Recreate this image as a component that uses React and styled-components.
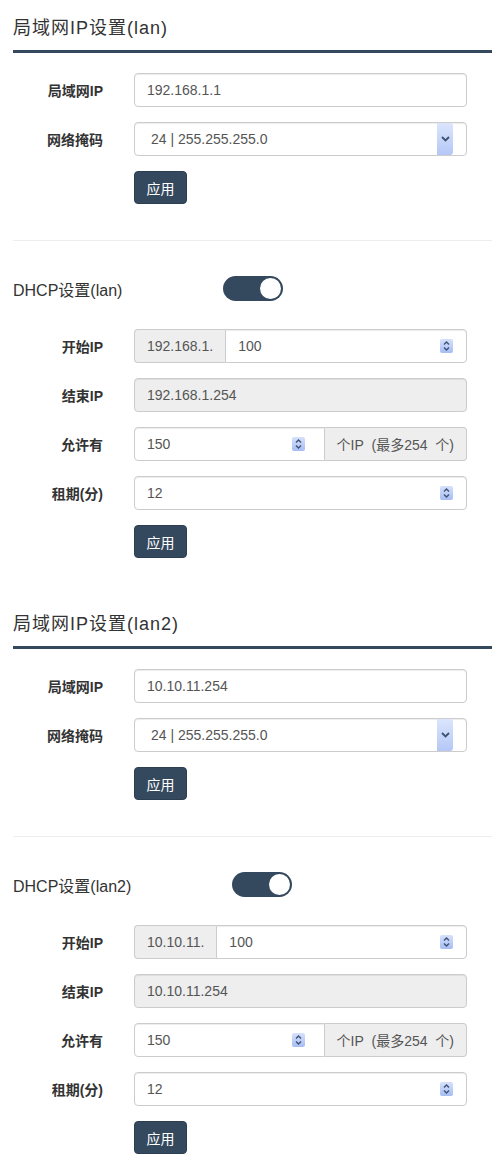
import React from "react";
import styled, { createGlobalStyle, css } from "styled-components";

const GlobalStyle = createGlobalStyle`
  body {
    margin: 0;
    background: #fff;
    color: #333;
    font-family: "Liberation Sans", Arial, "Noto Sans CJK SC", sans-serif;
    font-size: 14px;
  }
`;

const Page = styled.div`
  padding-left: 13px;
`;

const Section = styled.section`
  padding-bottom: 38px;
`;

const Title = styled.h3`
  margin: 0;
  padding: 16px 0 10px;
  font-size: 18px;
  line-height: 24px;
  letter-spacing: 1px;
  font-weight: normal;
  color: #333;
  border-bottom: 3px solid #34495e;
`;

const Form = styled.div`
  display: flex;
  flex-direction: column;
  gap: 15px;
  padding-right: 25px;
  margin-top: ${(p) => p.$top}px;
`;

const Row = styled.div`
  display: grid;
  grid-template-columns: 90px minmax(0, 1fr);
  column-gap: 31px;
  align-items: center;
`;

const Label = styled.label`
  text-align: right;
  font-weight: bold;
  font-size: 14px;
  color: #333;
`;

const Divider = styled.hr`
  margin: 36px 0 0;
  border: 0;
  border-top: 1px solid #eee;
`;

const DhcpHead = styled.div`
  display: flex;
  align-items: center;
  padding-top: 35px;
  font-size: 16px;
  color: #333;
`;

const Toggle = styled.div`
  margin-left: 101px;
  width: 60px;
  height: 25px;
  border-radius: 13px;
  background: #34495e;
  display: flex;
  align-items: center;
  justify-content: flex-end;
  padding: 0 2px;
  box-sizing: border-box;
  &::after {
    content: "";
    width: 21px;
    height: 21px;
    border-radius: 50%;
    background: #fff;
  }
`;

const Group = styled.div`
  display: flex;
  min-width: 0;
  height: 34px;
`;

const Addon = styled.span`
  display: flex;
  align-items: center;
  box-sizing: border-box;
  padding: 0 12px;
  background: #eee;
  border: 1px solid #ccc;
  color: #555;
  font-size: 14px;
  white-space: nowrap;
  ${(p) =>
    p.$side === "left"
      ? css`
          border-radius: 4px 0 0 4px;
          border-right: 0;
        `
      : css`
          border-radius: 0 4px 4px 0;
          border-left: 0;
        `}
`;

const Field = styled.div`
  flex: 1;
  min-width: 0;
  box-sizing: border-box;
  height: 34px;
  display: flex;
  align-items: center;
  padding: 0 ${(p) => p.$padRight || 13}px 0 ${(p) => p.$pad || 12}px;
  border: 1px solid #ccc;
  border-radius: ${(p) =>
    p.$join === "left" ? "0 4px 4px 0" : p.$join === "right" ? "4px 0 0 4px" : "4px"};
  background: ${(p) => (p.$readonly ? "#eee" : "#fff")};
  box-shadow: inset 0 1px 1px rgba(0, 0, 0, 0.075);
`;

const Input = styled.input`
  flex: 1;
  width: 0;
  min-width: 0;
  border: 0;
  outline: 0;
  padding: 0;
  background: transparent;
  font: inherit;
  font-size: 14px;
  color: #555;
`;

const SelectArrow = styled.span`
  align-self: stretch;
  width: 16px;
  margin-left: auto;
  border-radius: 0 3px 3px 0;
  background: linear-gradient(to bottom, #dbe5fc, #b4c7f6);
  display: flex;
  align-items: center;
  justify-content: center;
`;

const Button = styled.button`
  justify-self: start;
  height: 33px;
  width: 53px;
  padding: 0;
  border: 1px solid #2c3e50;
  border-radius: 4px;
  background: #34495e;
  color: #fff;
  font: inherit;
  font-size: 14px;
  cursor: pointer;
`;

function Spinner() {
  return (
    <svg width="13" height="14" viewBox="0 0 13 14">
      <defs>
        <linearGradient id="spg" x1="0" y1="0" x2="0" y2="1">
          <stop offset="0" stopColor="#d6e1fc" />
          <stop offset="1" stopColor="#a6bdf3" />
        </linearGradient>
      </defs>
      <rect x="0" y="0" width="13" height="14" rx="2" fill="url(#spg)" />
      <path d="M4 5.5 L6.5 3 L9 5.5" fill="none" stroke="#3f5271" strokeWidth="1.4" />
      <path d="M4 8.5 L6.5 11 L9 8.5" fill="none" stroke="#3f5271" strokeWidth="1.4" />
    </svg>
  );
}

function Chevron() {
  return (
    <svg width="9" height="6" viewBox="0 0 9 6">
      <path d="M1 1 L4.5 4.5 L8 1" fill="none" stroke="#3f5271" strokeWidth="1.8" />
    </svg>
  );
}

function LanSection({ name, ip, prefix, start, end }) {
  return (
    <Section>
      <Title>局域网IP设置({name})</Title>
      <Form $top={20}>
        <Row>
          <Label>局域网IP</Label>
          <Field>
            <Input defaultValue={ip} />
          </Field>
        </Row>
        <Row>
          <Label>网络掩码</Label>
          <Field $pad={16} $padRight={0}>
            <Input defaultValue="24 | 255.255.255.0" readOnly />
            <SelectArrow>
              <Chevron />
            </SelectArrow>
          </Field>
        </Row>
        <Row>
          <span />
          <Button>应用</Button>
        </Row>
      </Form>
      <Divider />
      <DhcpHead>
        DHCP设置({name})
        <Toggle />
      </DhcpHead>
      <Form $top={28}>
        <Row>
          <Label>开始IP</Label>
          <Group>
            <Addon $side="left">{prefix}</Addon>
            <Field $join="left">
              <Input defaultValue={start} />
              <Spinner />
            </Field>
          </Group>
        </Row>
        <Row>
          <Label>结束IP</Label>
          <Field $readonly>
            <Input defaultValue={end} readOnly />
          </Field>
        </Row>
        <Row>
          <Label>允许有</Label>
          <Group>
            <Field $join="right" $padRight={19}>
              <Input defaultValue="150" />
              <Spinner />
            </Field>
            <Addon $side="right">个IP&nbsp;&nbsp;(最多254&nbsp;&nbsp;个)</Addon>
          </Group>
        </Row>
        <Row>
          <Label>租期(分)</Label>
          <Field>
            <Input defaultValue="12" />
            <Spinner />
          </Field>
        </Row>
        <Row>
          <span />
          <Button>应用</Button>
        </Row>
      </Form>
    </Section>
  );
}

export default function App() {
  return (
    <Page>
      <GlobalStyle />
      <LanSection name="lan" ip="192.168.1.1" prefix="192.168.1." start="100" end="192.168.1.254" />
      <LanSection name="lan2" ip="10.10.11.254" prefix="10.10.11." start="100" end="10.10.11.254" />
    </Page>
  );
}
